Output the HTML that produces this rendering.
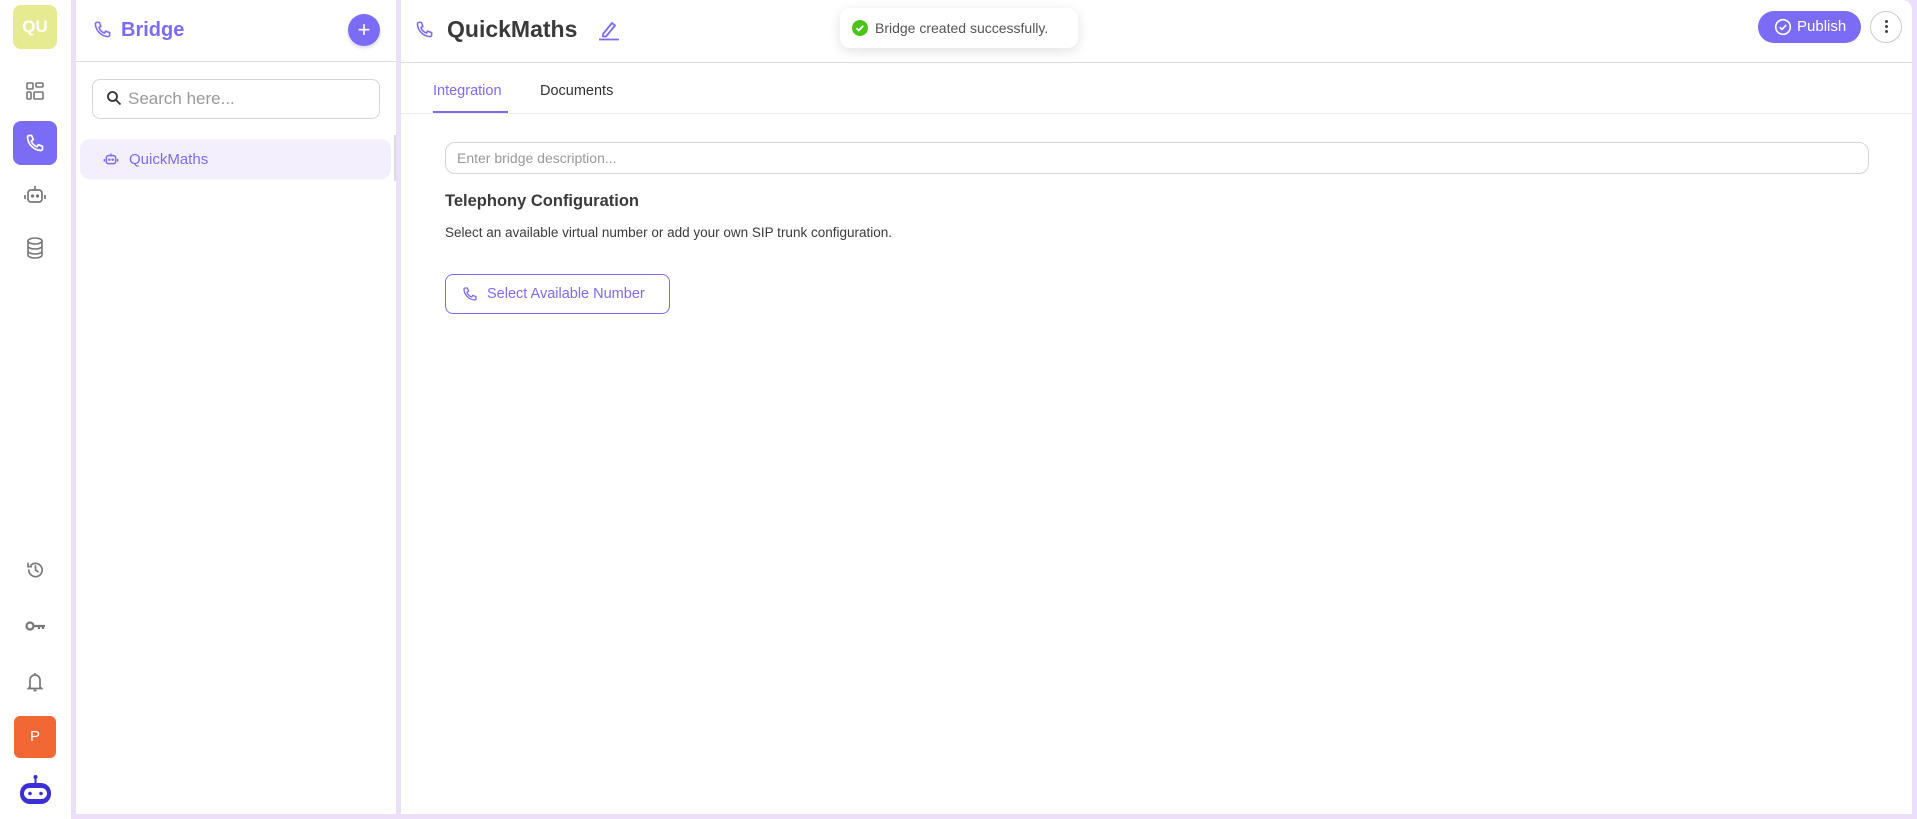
<!DOCTYPE html>
<html><head><meta charset="utf-8"><style>
*{box-sizing:border-box;margin:0;padding:0}
body{width:1917px;height:819px;overflow:hidden;background:#fff;font-family:"Liberation Sans",sans-serif;position:relative;color:#333}
.a{position:absolute}
svg{display:block}
</style></head><body>
<div class="a" style="left:71px;top:0;width:1846px;height:819px;background:#ecdffa"></div>
<div class="a" style="left:76px;top:0;width:320px;height:814px;background:#fff"></div>
<div class="a" style="left:401px;top:0;width:1511px;height:814px;background:#fff;border-radius:0 10px 0 0"></div>
<div class="a" style="left:394px;top:135px;width:2px;height:46px;background:#ddd"></div>

<div class="a" style="left:13px;top:5px;width:44px;height:44px;background:#e6ea90;border-radius:8px;color:#fff;font-weight:bold;font-size:17px;text-align:center;line-height:44px">QU</div>
<svg class="a" style="left:26px;top:82px" width="18" height="18" viewBox="0 0 18 18" fill="none" stroke="#777" stroke-width="1.6"><rect x="1" y="1" width="6" height="6" rx="1"/><rect x="10" y="1" width="7" height="4" rx="1"/><rect x="1" y="10" width="4" height="7" rx="1"/><rect x="8" y="10" width="9" height="7" rx="1"/></svg>
<div class="a" style="left:13px;top:121px;width:44px;height:44px;background:#7b6cf6;border-radius:8px"></div>
<svg class="a" style="left:25px;top:133px" width="20" height="20" viewBox="0 0 24 24" fill="none" stroke="#fff" stroke-width="2" stroke-linecap="round" stroke-linejoin="round"><path d="M5 3h3l2 5-2.5 1.5a11 11 0 0 0 7 7L16 14l5 2v3a2 2 0 0 1-2 2A17 17 0 0 1 3 5a2 2 0 0 1 2-2z"/></svg>
<svg class="a" style="left:23px;top:183px" width="24" height="24" viewBox="0 0 24 24" fill="none" stroke="#777" stroke-width="1.7"><rect x="5" y="7" width="14" height="12" rx="3"/><path d="M12 7V3M2 12v4M22 12v4"/><circle cx="9.5" cy="13" r=".8" fill="#777"/><circle cx="14.5" cy="13" r=".8" fill="#777"/></svg>
<svg class="a" style="left:25px;top:237px" width="20" height="22" viewBox="0 0 20 22" fill="none" stroke="#777" stroke-width="1.6"><ellipse cx="10" cy="4" rx="7" ry="3"/><path d="M3 4v14c0 1.7 3 3 7 3s7-1.3 7-3V4M3 9c0 1.7 3 3 7 3s7-1.3 7-3M3 14c0 1.7 3 3 7 3s7-1.3 7-3"/></svg>
<svg class="a" style="left:25px;top:560px" width="21" height="20" viewBox="0 0 24 24" fill="none" stroke="#777" stroke-width="2" stroke-linecap="round"><path d="M4 12a8 8 0 1 0 2.5-5.8M3 4v4h4"/><path d="M12 7v5l3 2"/></svg>
<svg class="a" style="left:25px;top:620px" width="21" height="12" viewBox="0 0 21 12" fill="none" stroke="#777" stroke-width="2.2"><circle cx="5" cy="6" r="3.5"/><path d="M8.5 6H20M14 6v3M18 6v3"/></svg>
<svg class="a" style="left:27px;top:672px" width="16" height="20" viewBox="0 0 16 20" fill="none" stroke="#777" stroke-width="1.7"><path d="M3 15V8a5 5 0 0 1 10 0v7l1.5 1.5h-13zM8 1v2M6.5 18.5h3"/></svg>
<div class="a" style="left:14px;top:716px;width:42px;height:42px;background:#f26835;border-radius:6px;color:#fff;font-size:15px;text-align:center;line-height:42px">P</div>
<svg class="a" style="left:19px;top:774px" width="33" height="32" viewBox="0 0 33 32"><circle cx="16.5" cy="3" r="2" fill="#3b2fd6"/><rect x="15.5" y="3" width="2" height="6" fill="#3b2fd6"/><rect x="1" y="9" width="31" height="21" rx="10" fill="#3b2fd6"/><rect x="5" y="14" width="23" height="11" rx="5.5" fill="#fff"/><circle cx="11" cy="19.5" r="1.8" fill="#3b2fd6"/><circle cx="22" cy="19.5" r="1.8" fill="#3b2fd6"/></svg>

<svg class="a" style="left:93px;top:20px" width="19" height="19" viewBox="0 0 24 24" fill="none" stroke="#7b6cf6" stroke-width="2" stroke-linecap="round" stroke-linejoin="round"><path d="M5 3h3l2 5-2.5 1.5a11 11 0 0 0 7 7L16 14l5 2v3a2 2 0 0 1-2 2A17 17 0 0 1 3 5a2 2 0 0 1 2-2z"/></svg>
<div class="a" style="left:121px;top:19px;font-size:20px;font-weight:bold;color:#7b6cf6">Bridge</div>
<div class="a" style="left:348px;top:14px;width:32px;height:32px;border-radius:50%;background:#7b6cf6;color:#fff;font-size:22px;text-align:center;line-height:31px;box-shadow:0 2px 3px rgba(123,108,246,.3)">+</div>
<div class="a" style="left:76px;top:61px;width:320px;height:1px;background:#ddd"></div>
<div class="a" style="left:92px;top:79px;width:288px;height:40px;border:1px solid #d5d5d5;border-radius:8px"></div>
<svg class="a" style="left:106px;top:90px" width="16" height="16" viewBox="0 0 16 16" fill="none" stroke="#333" stroke-width="1.8"><circle cx="6.5" cy="6.5" r="4.5"/><path d="M10 10l4.5 4.5"/></svg>
<div class="a" style="left:128px;top:89px;font-size:17px;color:#999">Search here...</div>
<div class="a" style="left:80px;top:139px;width:311px;height:40px;background:#f3effd;border-radius:10px"></div>
<svg class="a" style="left:103px;top:151px" width="16" height="16" viewBox="0 0 24 24" fill="none" stroke="#7b6cf6" stroke-width="2.2"><rect x="5" y="7" width="14" height="12" rx="3"/><path d="M12 7V4M2 12v4M22 12v4"/><circle cx="9.5" cy="13" r=".8"/><circle cx="14.5" cy="13" r=".8"/></svg>
<div class="a" style="left:129px;top:151px;font-size:15px;color:#7b6cf6">QuickMaths</div>

<svg class="a" style="left:415px;top:20px" width="19" height="19" viewBox="0 0 24 24" fill="none" stroke="#7b6cf6" stroke-width="2" stroke-linecap="round" stroke-linejoin="round"><path d="M5 3h3l2 5-2.5 1.5a11 11 0 0 0 7 7L16 14l5 2v3a2 2 0 0 1-2 2A17 17 0 0 1 3 5a2 2 0 0 1 2-2z"/></svg>
<div class="a" style="left:447px;top:16px;font-size:23px;font-weight:bold;color:#3a3a3a">QuickMaths</div>
<svg class="a" style="left:598px;top:19px" width="22" height="22" viewBox="0 0 22 22" fill="none" stroke="#7b6cf6" stroke-width="1.8" stroke-linejoin="round"><path d="M5 15l9-11 3 2.5-9 11H5z"/><path d="M1 20.5h20"/></svg>
<div class="a" style="left:840px;top:8px;width:238px;height:40px;background:#fff;border-radius:10px;box-shadow:0 3px 12px rgba(0,0,0,.12)"></div>
<div class="a" style="left:852px;top:20px;width:16px;height:16px;border-radius:50%;background:#4fc31d"></div>
<svg class="a" style="left:852px;top:20px" width="16" height="16" viewBox="0 0 16 16" fill="none" stroke="#fff" stroke-width="1.8"><path d="M4.5 8.2l2.3 2.3 4.5-4.8"/></svg>
<div class="a" style="left:875px;top:20px;font-size:14px;color:#555">Bridge created successfully.</div>
<div class="a" style="left:1758px;top:11px;width:103px;height:32px;background:#7b6cf6;border-radius:16px"></div>
<svg class="a" style="left:1774px;top:18px" width="18" height="18" viewBox="0 0 18 18" fill="none" stroke="#fff" stroke-width="1.6"><circle cx="9" cy="9" r="7.3"/><path d="M5.8 9.2l2.2 2.2 4.2-4.5"/></svg>
<div class="a" style="left:1797px;top:18px;font-size:15px;color:#fff">Publish</div>
<div class="a" style="left:1870px;top:11px;width:32px;height:32px;border:1px solid #ccc;border-radius:50%"></div>
<div class="a" style="left:1884.5px;top:20px;width:3px;height:3px;background:#444;border-radius:50%;box-shadow:0 5px 0 #444,0 10px 0 #444"></div>
<div class="a" style="left:401px;top:62px;width:1511px;height:1px;background:#ddd"></div>

<div class="a" style="left:433px;top:83px;font-size:14.5px;color:#7b6cf6">Integration</div>
<div class="a" style="left:540px;top:83px;font-size:14.5px;color:#333">Documents</div>
<div class="a" style="left:433px;top:111px;width:75px;height:2px;background:#7b6cf6"></div>
<div class="a" style="left:401px;top:113px;width:1511px;height:1px;background:#eee"></div>

<div class="a" style="left:445px;top:142px;width:1424px;height:32px;border:1px solid #d5d5d5;border-radius:10px"></div>
<div class="a" style="left:457px;top:150px;font-size:14px;color:#999">Enter bridge description...</div>
<div class="a" style="left:445px;top:192px;font-size:16.5px;font-weight:bold;color:#3a3a3a">Telephony Configuration</div>
<div class="a" style="left:445px;top:225px;font-size:13.5px;color:#3a3a3a">Select an available virtual number or add your own SIP trunk configuration.</div>
<div class="a" style="left:445px;top:274px;width:225px;height:40px;border:1px solid #7b6cf6;border-radius:8px"></div>
<svg class="a" style="left:462px;top:286px" width="16" height="16" viewBox="0 0 24 24" fill="none" stroke="#7b6cf6" stroke-width="2" stroke-linecap="round" stroke-linejoin="round"><path d="M5 3h3l2 5-2.5 1.5a11 11 0 0 0 7 7L16 14l5 2v3a2 2 0 0 1-2 2A17 17 0 0 1 3 5a2 2 0 0 1 2-2z"/></svg>
<div class="a" style="left:487px;top:286px;font-size:14.5px;color:#7b6cf6">Select Available Number</div>
</body></html>
